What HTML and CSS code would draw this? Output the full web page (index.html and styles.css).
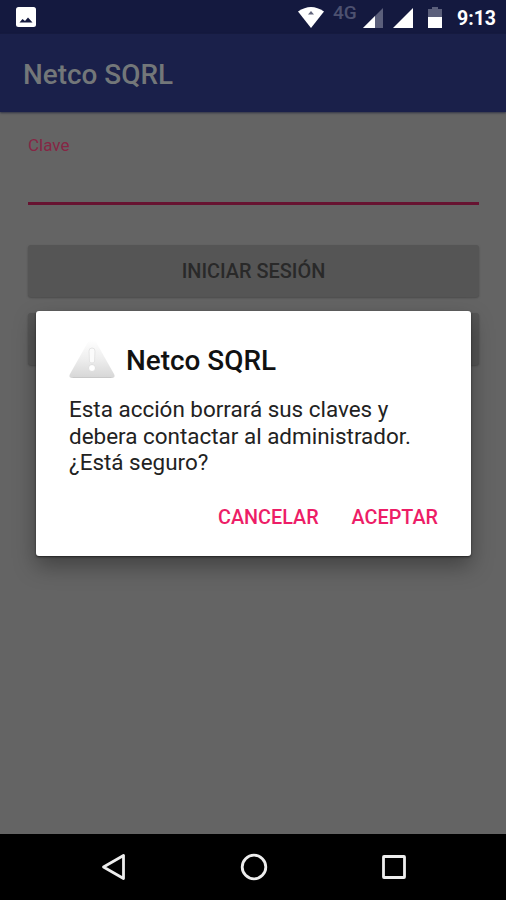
FILE: index.html
```html
<!DOCTYPE html>
<html lang="es">
<head>
<meta charset="utf-8">
<title>Netco SQRL</title>
<link rel="stylesheet" href="styles.css">
</head>
<body>
<div class="screen">
  <header class="status">
    <svg class="photo" viewBox="0 0 20 20" width="20" height="20"><rect width="20" height="20" rx="2.5" fill="#fff"/><path d="M3.500 15.500l3-3.500 2.500 2 3-3.500 4.500 5z" fill="#151a3f"/></svg>
    <div class="indicators">
      <svg class="wifi" viewBox="0 0 26 21" width="26" height="21"><path d="M0 4.500Q13-4.500 26 4.500L13 21z" fill="#fff"/><path d="M10 7.500l3-3.500 3 3.500z" fill="#62657c"/></svg>
      <span class="network">4G</span>
      <svg class="signal" viewBox="0 0 20 20" width="20" height="20"><path d="M20 0v20H0z" fill="#5b5f7b"/><path d="M12 8v12H0z" fill="#fff"/></svg>
      <svg class="signal-full" viewBox="0 0 20 20" width="20" height="20"><path d="M20 0v20H0z" fill="#fff"/></svg>
      <svg class="battery" viewBox="0 0 14 21" width="14" height="21"><path d="M4 0h6v2h4v8H0V2h4z" fill="#5b5f7b"/><path d="M0 10h14v11H0z" fill="#fff"/></svg>
      <span class="clock">9:13</span>
    </div>
  </header>
  <div class="appbar"><span>Netco SQRL</span></div>
  <main class="content">
    <div class="field"><span>Clave</span></div>
    <div class="button"><span>INICIAR SESIÓN</span></div>
    <div class="button"></div>
  </main>
  <nav class="navbar">
    <svg viewBox="0 0 28 28" width="28" height="28"><path d="M23.500 2.500v23L3.500 14z"/></svg>
    <svg viewBox="0 0 28 28" width="28" height="28"><circle cx="14" cy="14" r="11.800"/></svg>
    <svg viewBox="0 0 28 28" width="28" height="28"><rect x="3.500" y="3.500" width="21" height="21" rx=".5"/></svg>
  </nav>
  <section class="dialog">
    <div class="heading">
      <svg viewBox="0 0 46 42" width="46" height="42">
        <defs><linearGradient id="metal" x1="0" y1="0" x2="0" y2="1"><stop offset="0" stop-color="#fff"/><stop offset=".5" stop-color="#eee"/><stop offset="1" stop-color="#d6d6d6"/></linearGradient></defs>
        <path d="M19 3Q23-1 27 3L45 35Q47 39 42 39H4Q-1 39 1 35z" fill="url(#metal)"/>
        <path d="M4 38.500h38" stroke="#c8c8c8" stroke-linecap="round"/>
        <path d="M20 12q0-3 3-3t3 3l-.5 11q-2.500 2-5 0z" fill="#fbfbfb" stroke="#e0e0e0" stroke-width=".8"/>
        <circle cx="23" cy="29" r="3.500" fill="#fff" stroke="#d8d8d8" stroke-width=".8"/>
      </svg>
      <h1>Netco SQRL</h1>
    </div>
    <p>Esta acción borrará sus claves y<br>debera contactar al administrador.<br>¿Está seguro?</p>
    <div class="actions"><span class="cancel">CANCELAR</span><span class="accept">ACEPTAR</span></div>
  </section>
</div>
</body>
</html>
```
FILE: styles.css
```css
* { box-sizing: border-box; }
body { margin: 0; font-family: Roboto, sans-serif; }
svg { display: block; flex: none; }
.screen {
  position: relative;
  width: 506px;
  height: 900px;
  display: flex;
  flex-direction: column;
  overflow: hidden;
  background: #646464;
}
.status {
  height: 34px;
  flex: none;
  display: flex;
  justify-content: space-between;
  padding: 7px 10px 0 16px;
  background: #14193f;
}
.indicators { display: flex; color: #fff; }
.network {
  margin-left: 9px;
  width: 25px;
  font-size: 19px;
  line-height: 22px;
  margin-top: -5px;
  font-weight: 500;
  color: #4d5170;
}
.signal { margin: 1px 0 0 5px; }
.signal-full { margin: 1px 0 0 10px; }
.battery { margin-left: 15px; }
.clock {
  margin-left: 15px;
  width: 39px;
  font-size: 19.5px;
  line-height: 24px;
  font-weight: 700;
  white-space: nowrap;
}
.appbar {
  height: 78px;
  flex: none;
  padding: 2px 23px 0;
  display: flex;
  align-items: center;
  background: #1a204a;
  box-shadow: 0 1px 2px #303346;
  color: #737779;
  font-size: 27.9px;
  font-weight: 500;
}
.content { flex: 1; padding: 22px 27px 0 28px; }
.field {
  height: 71px;
  border-bottom: 3px solid #671331;
  color: #862644;
  font-size: 17px;
  line-height: 22px;
}
.button {
  height: 52px;
  margin-bottom: 16px;
  padding-top: 1px;
  display: flex;
  align-items: center;
  justify-content: center;
  border-radius: 3px;
  background: #555;
  box-shadow: 0 1px 2px #4b4b4b;
  color: #292929;
  font-size: 19.9px;
  font-weight: 500;
}
.field + .button { margin-top: 40px; }
.navbar {
  height: 66px;
  flex: none;
  padding: 0 98px 0 100px;
  display: flex;
  align-items: center;
  justify-content: space-between;
  background: #000;
}
.navbar svg { fill: none; stroke: #eee; stroke-width: 2.8; stroke-linejoin: round; }
.dialog {
  position: absolute;
  left: 36px;
  top: 311px;
  width: 435px;
  height: 245px;
  padding: 27px 33px 0;
  border-radius: 3px;
  background: #fff;
  box-shadow: 0 1px 2px #222, 0 10px 22px rgba(0, 0, 0, .35);
}
.heading { display: flex; align-items: center; height: 44px; }
h1 { margin: 1px 0 0 11px; font-size: 27.9px; line-height: 32px; font-weight: 500; color: #111; }
p { margin: 14px 0 0; font-size: 22.45px; line-height: 26.5px; white-space: nowrap; color: #222; }
.actions {
  display: flex;
  justify-content: flex-end;
  gap: 33px;
  margin-top: 30px;
  color: #ed1d67;
  font-size: 19.8px;
  line-height: 24px;
  font-weight: 500;
}
```
